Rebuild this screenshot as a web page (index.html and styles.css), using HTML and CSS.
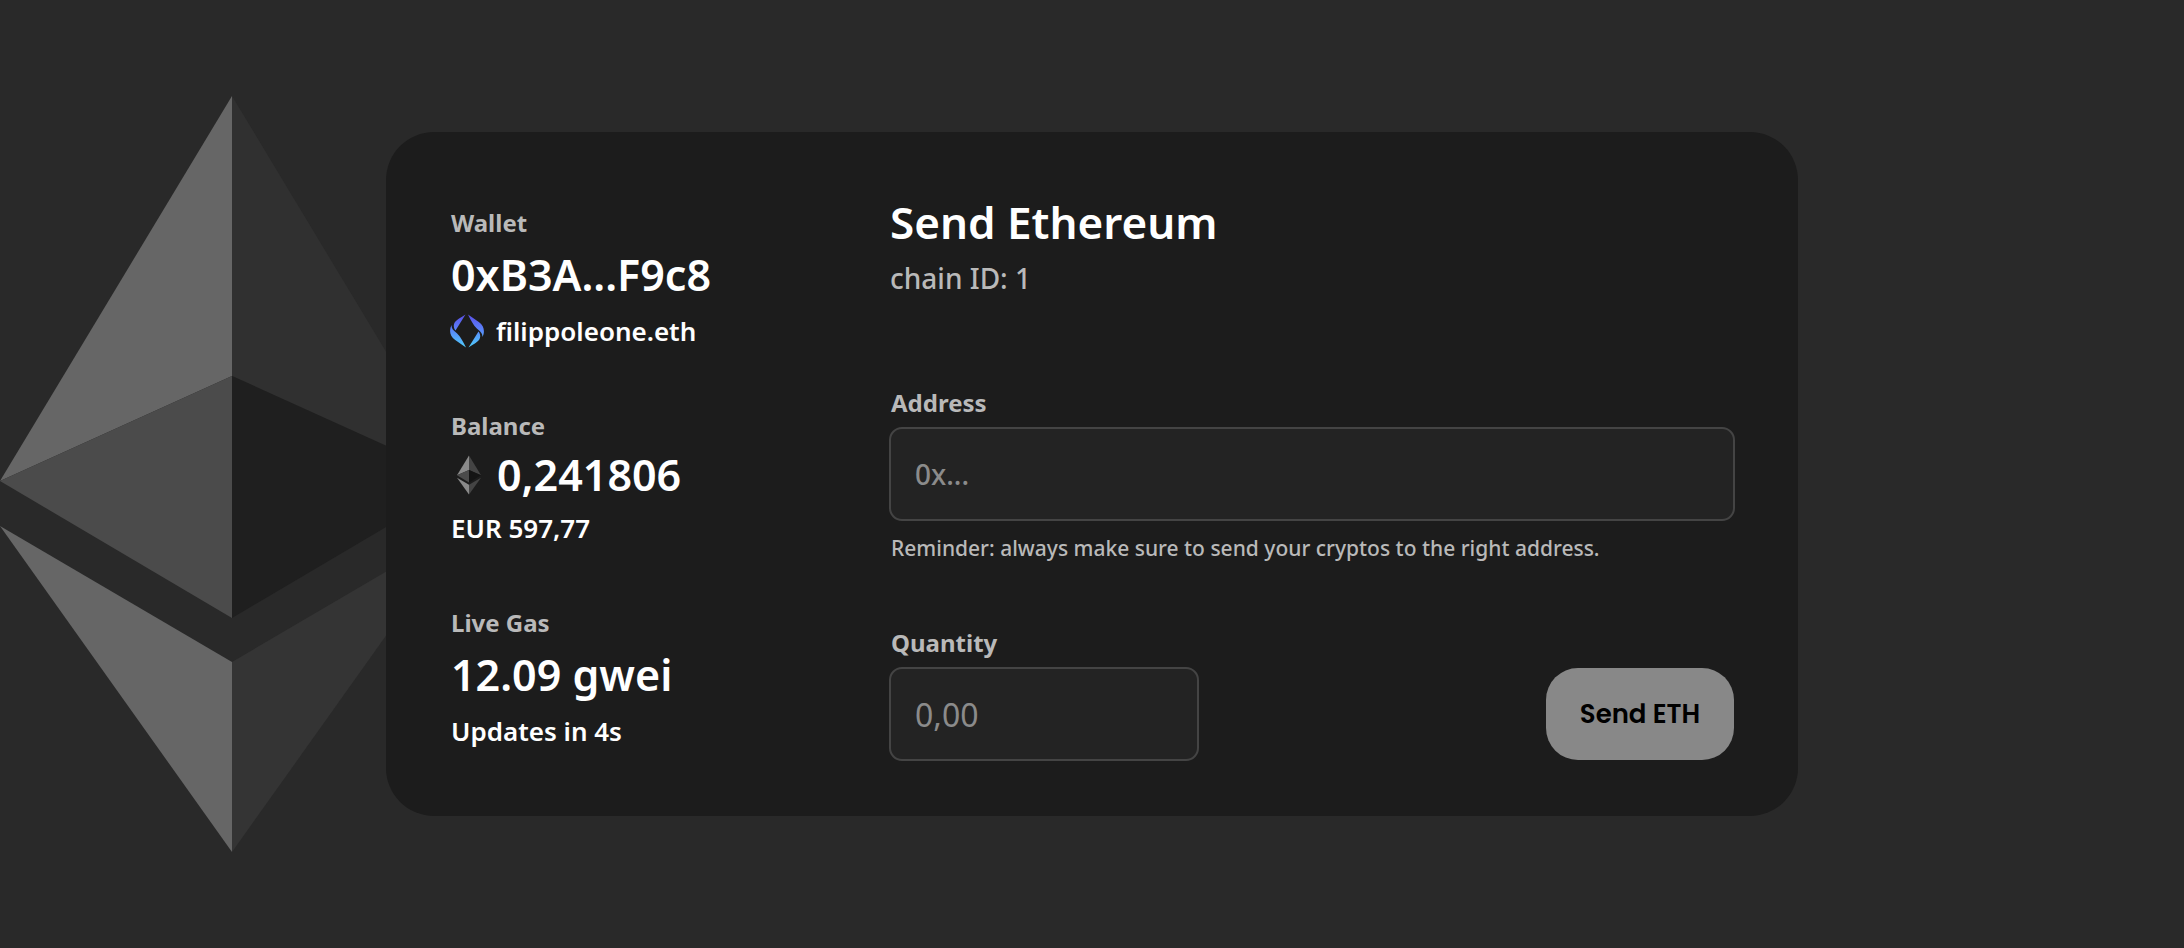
FILE: index.html
```html
<!DOCTYPE html>
<html lang="en">
<head>
    <meta charset="UTF-8">
    <meta name="viewport" content="width=device-width, initial-scale=1.0">
    <title>Send Ethereum</title>
    <link rel="stylesheet" href="styles.css">
</head>
<body>

<svg class="backdrop" viewBox="0 0 464 756" aria-hidden="true">
    <polygon fill="#666666" points="232,0 0,385 232,280"/>
    <polygon fill="#303030" points="232,0 464,385 232,280"/>
    <polygon fill="#4b4b4b" points="0,385 232,280 232,522"/>
    <polygon fill="#1f1f1f" points="464,385 232,280 232,522"/>
    <polygon fill="#666666" points="0,430 232,566 232,756"/>
    <polygon fill="#343434" points="464,430 232,566 232,756"/>
</svg>

<main class="card">
    <div class="info">
        <section class="stat">
            <h2 class="label">Wallet</h2>
            <p class="value">0xB3A...F9c8</p>
            <p class="sub">
                <svg class="ens-icon" viewBox="0 0 34 34" aria-hidden="true">
                    <defs>
                        <linearGradient id="ens" x1="0" y1="0" x2="0" y2="34" gradientUnits="userSpaceOnUse">
                            <stop offset="0" stop-color="#5a4de8"/>
                            <stop offset="0.4" stop-color="#5b7cf8"/>
                            <stop offset="1" stop-color="#4fd0fb"/>
                        </linearGradient>
                    </defs>
                    <path fill="url(#ens)" d="M15.500 0.500L5.500 16.500C3.500 14 3.200 10.500 4.800 8.200C5.800 6.800 9 4.500 15.500 0.500ZM1.500 11C1.500 14.500 3 16 6 18.500C9 21 12 25 16 33.500L5.200 26C-0.500 22 -1 16 1.500 11Z"/>
                    <path fill="url(#ens)" d="M18.500 33.500L28.500 17.500C30.500 20 30.800 23.500 29.200 25.800C28.200 27.200 25 29.500 18.500 33.500ZM32.500 23C32.500 19.500 31 18 28 15.500C25 13 22 9 18 0.500L28.800 8C34.500 12 35 18 32.500 23Z"/>
                </svg>
                filippoleone.eth
            </p>
        </section>

        <section class="stat stat-tight">
            <h2 class="label">Balance</h2>
            <p class="value">
                <svg class="eth-icon" viewBox="0 0 464 756" aria-hidden="true">
                    <polygon fill="#8a8a8a" points="232,0 0,385 232,280"/>
                    <polygon fill="#444444" points="232,0 464,385 232,280"/>
                    <polygon fill="#4b4b4b" points="0,385 232,280 232,522"/>
                    <polygon fill="#141414" points="464,385 232,280 232,522"/>
                    <polygon fill="#8a8a8a" points="0,430 232,566 232,756"/>
                    <polygon fill="#444444" points="464,430 232,566 232,756"/>
                </svg>
                0,241806
            </p>
            <p class="sub">EUR 597,77</p>
        </section>

        <section class="stat">
            <h2 class="label">Live Gas</h2>
            <p class="value">12.09 gwei</p>
            <p class="sub">Updates in 4s</p>
        </section>
    </div>

    <form class="send" onsubmit="return false">
        <header class="send-header">
            <h1>Send Ethereum</h1>
            <p class="chain">chain ID: 1</p>
        </header>

        <div class="field">
            <label class="label" for="address">Address</label>
            <input type="text" id="address" placeholder="0x..." aria-describedby="reminder">
            <p class="reminder" id="reminder">Reminder: always make sure to send your cryptos to the right address.</p>
        </div>

        <div class="send-footer">
            <div class="field field-quantity">
                <label class="label" for="quantity">Quantity</label>
                <input type="text" id="quantity" inputmode="decimal" placeholder="0,00">
            </div>
            <button type="submit">Send ETH</button>
        </div>
    </form>
</main>

</body>
</html>
```
FILE: styles.css
```css
* {
    box-sizing: border-box;
}

body {
    margin: 0;
    min-height: 100vh;
    display: flex;
    align-items: center;
    justify-content: center;
    background: #292929;
    color: #fff;
    font-family: "Segoe UI", "Noto Sans", sans-serif;
    font-weight: 600;
}

h1, h2, p {
    margin: 0;
    font-weight: 600;
}

.backdrop {
    position: absolute;
    left: 0;
    top: calc(50% - 378px);
    height: 756px;
}

.card {
    position: relative;
    display: grid;
    grid-template-columns: 439px 1fr;
    width: 90%;
    max-width: 1412px;
    padding: 60px 63px 55px 64px;
    border-radius: 48px;
    background: #1c1c1c;
}

.info {
    display: flex;
    flex-direction: column;
    gap: 59px;
    padding: 15px 0 0 1px;
}

.stat {
    display: flex;
    flex-direction: column;
    gap: 6px;
}

.stat-tight {
    gap: 3px;
}

.label {
    font-size: 24px;
    font-weight: 700;
    line-height: 32px;
    color: #b9b9b9;
}

.value {
    display: flex;
    align-items: center;
    gap: 16px;
    font-size: 43px;
    line-height: 60px;
}

.sub {
    display: flex;
    align-items: center;
    gap: 12px;
    font-size: 26px;
    line-height: 40px;
}

.ens-icon {
    width: 34px;
    height: 34px;
    margin-left: -1px;
}

.eth-icon {
    width: 24px;
    height: 40px;
    margin-left: 6px;
}

.send {
    display: flex;
    flex-direction: column;
}

.send-header {
    display: flex;
    flex-direction: column;
    gap: 6px;
    margin-bottom: 89px;
    padding-left: 1px;
}

h1 {
    font-size: 44px;
    line-height: 60px;
}

.chain {
    font-size: 28px;
    font-weight: 500;
    line-height: 40px;
    color: #b9b9b9;
}

.field {
    display: flex;
    flex-direction: column;
    gap: 8px;
}

.field .label,
.reminder {
    padding-left: 2px;
}

.field-quantity {
    width: 310px;
}

input {
    width: 100%;
    height: 94px;
    padding: 0 24px;
    border: 2px solid #444;
    border-radius: 13px;
    background: #232323;
    color: #fff;
    font: 500 28px "Segoe UI", "Noto Sans", sans-serif;
}

.field-quantity input {
    font-size: 32px;
    font-weight: 400;
}

input::placeholder {
    color: #8b8b8b;
}

.reminder {
    margin-top: 3px;
    font-size: 21px;
    font-weight: 500;
    line-height: 32px;
    color: #b9b9b9;
}

.send-footer {
    display: flex;
    align-items: flex-end;
    justify-content: space-between;
    margin-top: 63px;
}

button {
    width: 188px;
    height: 92px;
    margin: 0 1px 1px 0;
    border: none;
    border-radius: 32px;
    background: #888;
    color: #000;
    font: 600 26px Poppins, Inter, sans-serif;
    cursor: pointer;
}

button:hover {
    background: #999;
}
```
